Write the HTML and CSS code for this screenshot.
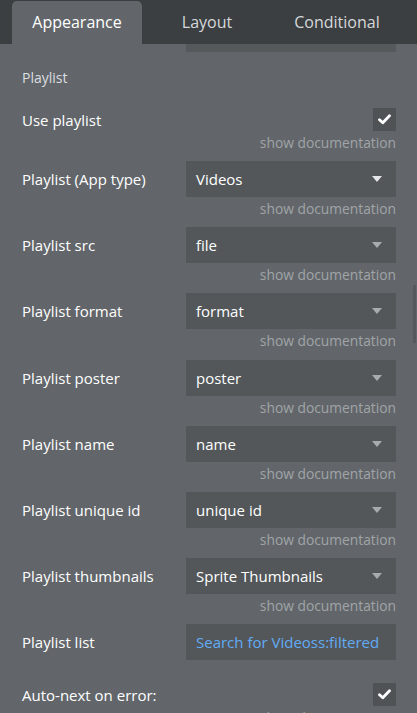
FILE: index.html
```html
<!DOCTYPE html>
<html>
<head>
<meta charset="utf-8">
<link rel="stylesheet" href="styles.css">
</head>
<body>
<div class="tabs">
  <div class="tab active">Appearance</div>
  <div class="tab">Layout</div>
  <div class="tab">Conditional</div>
</div>
<div class="panel">
  <div class="cutoff"></div>
  <div class="section">Playlist</div>

  <div class="prop">
    <div class="row check-row">
      <span class="label">Use playlist</span>
      <span class="checkbox"><svg width="13" height="11" viewBox="0 0 13 11"><path d="M1.5 5.8 L4.8 8.8 L11.5 1.8" fill="none" stroke="#fff" stroke-width="2.8" stroke-linecap="round" stroke-linejoin="round"/></svg></span>
    </div>
    <div class="doc">show documentation</div>
  </div>

  <div class="prop">
    <div class="row">
      <span class="label">Playlist (App type)</span>
      <div class="select"><span class="value">Videos</span><span class="arrow light"></span></div>
    </div>
    <div class="doc">show documentation</div>
  </div>

  <div class="prop">
    <div class="row">
      <span class="label">Playlist src</span>
      <div class="select"><span class="value">file</span><span class="arrow"></span></div>
    </div>
    <div class="doc">show documentation</div>
  </div>

  <div class="prop">
    <div class="row">
      <span class="label">Playlist format</span>
      <div class="select"><span class="value">format</span><span class="arrow"></span></div>
    </div>
    <div class="doc">show documentation</div>
  </div>

  <div class="prop">
    <div class="row">
      <span class="label">Playlist poster</span>
      <div class="select"><span class="value">poster</span><span class="arrow"></span></div>
    </div>
    <div class="doc">show documentation</div>
  </div>

  <div class="prop">
    <div class="row">
      <span class="label">Playlist name</span>
      <div class="select"><span class="value">name</span><span class="arrow"></span></div>
    </div>
    <div class="doc">show documentation</div>
  </div>

  <div class="prop">
    <div class="row">
      <span class="label">Playlist unique id</span>
      <div class="select"><span class="value">unique id</span><span class="arrow"></span></div>
    </div>
    <div class="doc">show documentation</div>
  </div>

  <div class="prop">
    <div class="row">
      <span class="label">Playlist thumbnails</span>
      <div class="select"><span class="value">Sprite Thumbnails</span><span class="arrow"></span></div>
    </div>
    <div class="doc">show documentation</div>
  </div>

  <div class="prop list-prop">
    <div class="row">
      <span class="label">Playlist list</span>
      <div class="select"><span class="value link">Search for Videoss:filtered</span></div>
    </div>
  </div>

  <div class="prop">
    <div class="row check-row">
      <span class="label">Auto-next on error:</span>
      <span class="checkbox"><svg width="13" height="11" viewBox="0 0 13 11"><path d="M1.5 5.8 L4.8 8.8 L11.5 1.8" fill="none" stroke="#fff" stroke-width="2.8" stroke-linecap="round" stroke-linejoin="round"/></svg></span>
    </div>
    <div class="doc">show documentation</div>
  </div>
</div>
<div class="scrollbar"></div>
</body>
</html>
```

FILE: styles.css
```css
html, body {
  margin: 0;
  padding: 0;
  height: 100%;
  overflow: hidden;
}
body {
  background: #62666a;
  font-family: "Open Sans", "Noto Sans", sans-serif;
  color: #ffffff;
  position: relative;
}
.tabs {
  display: flex;
  height: 44px;
  background: #3b3f42;
  padding-left: 12px;
  box-sizing: border-box;
  align-items: flex-end;
}
.tab {
  width: 130px;
  height: 43px;
  display: flex;
  align-items: center;
  justify-content: center;
  font-size: 16px;
  color: #d6d8da;
  padding-bottom: 1px;
  box-sizing: border-box;
}
.tab.active {
  background: #62666a;
  color: #ffffff;
  border-radius: 5px 5px 0 0;
}
.panel {
  padding: 0 21px 0 22px;
}
.cutoff {
  margin-left: auto;
  width: 210px;
  height: 8px;
  background: #56595c;
}
.section {
  margin-top: 16px;
  line-height: 20px;
  font-size: 14px;
  color: #dcdee0;
  margin-bottom: 20px;
}
.prop {
  margin-bottom: 8.14px;
}
.row {
  display: flex;
  align-items: center;
  justify-content: space-between;
  height: 36px;
}
.row.check-row {
  height: 23px;
}
.label {
  font-size: 15px;
  color: #ffffff;
}
.select {
  width: 210px;
  height: 36px;
  background: #53575a;
  display: flex;
  align-items: center;
  justify-content: space-between;
  padding: 0 14px 0 10px;
  box-sizing: border-box;
}
.value {
  font-size: 15px;
  color: #ffffff;
  white-space: nowrap;
}
.value.link {
  color: #62abf5;
}
.arrow {
  width: 0;
  height: 0;
  border-left: 5.5px solid transparent;
  border-right: 5.5px solid transparent;
  border-top: 6px solid #a7abaf;
}
.arrow.light {
  border-top-color: #e4e6e8;
}
.checkbox {
  width: 23px;
  height: 23px;
  background: #4f5356;
  display: flex;
  align-items: center;
  justify-content: center;
}
.doc {
  text-align: right;
  font-size: 13.8px;
  line-height: 21px;
  padding-top: 1px;
  color: #a0a4a7;
}
.list-prop {
  margin-bottom: 23px;
}
.scrollbar {
  position: absolute;
  right: 1px;
  top: 285px;
  width: 3px;
  height: 58px;
  background: #55595c;
}
```
